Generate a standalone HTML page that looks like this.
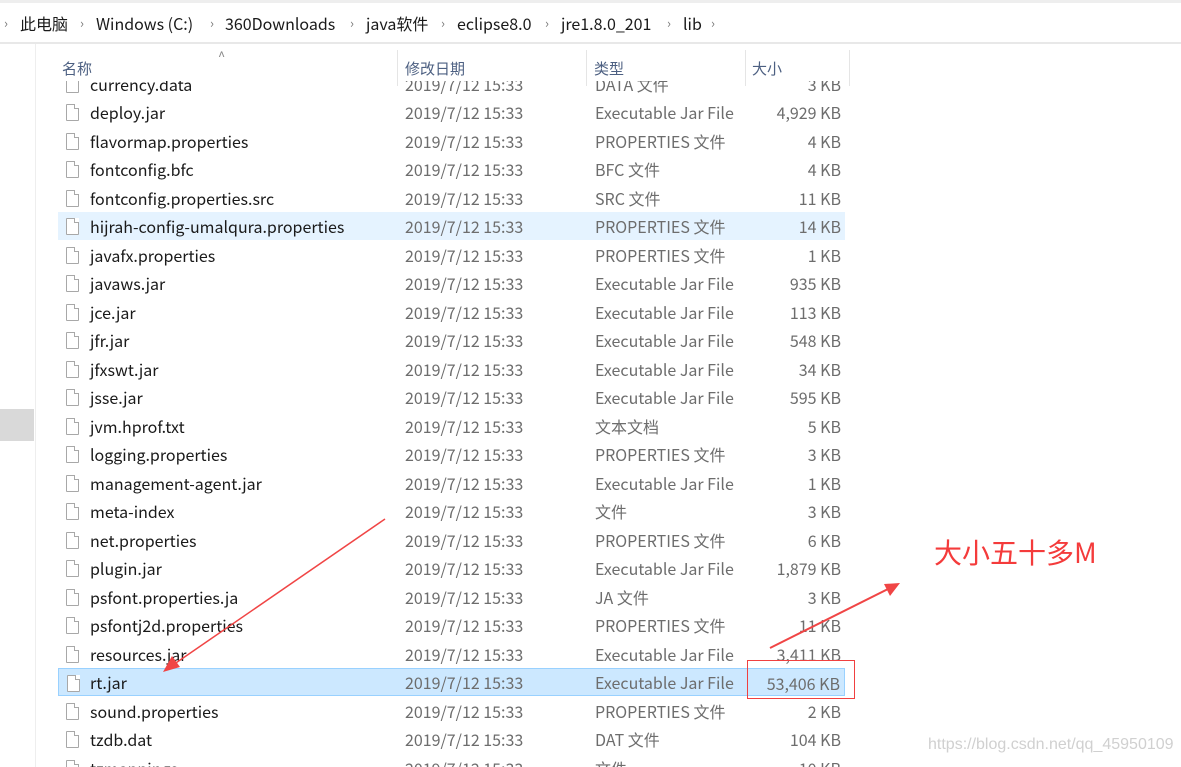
<!DOCTYPE html>
<html><head><meta charset="utf-8"><style>
*{margin:0;padding:0;box-sizing:border-box}
body{width:1181px;height:767px;background:#fff;position:relative;overflow:hidden;font-family:"Noto Sans CJK SC","Liberation Sans",sans-serif;font-size:16px}
.bc{position:absolute;left:0;top:0;width:1181px;height:44px;border-top:3px solid #eee;border-bottom:2px solid #e8e8e8;color:#1a1a1a;font-size:16px}
.bc span{position:absolute;top:0;line-height:40px;white-space:nowrap}
.bc .c{color:#777;font-size:13px}
.lp{position:absolute;left:35px;top:44px;width:1px;height:723px;background:#eee}
.gray{position:absolute;left:0;top:409px;width:34px;height:32px;background:#d9d9d9}
.hd{position:absolute;top:57px;line-height:24px;color:#4d6082;font-size:15px}
.sep{position:absolute;top:50px;width:1px;height:36px;background:#e5e5e5}
.list{position:absolute;left:36px;top:81px;width:850px;height:686px;overflow:hidden}
.row{position:absolute;left:22px;width:787px;height:28px}
.row.sel{background:#cce8ff;border:1px solid #99d1ff}
.row.hov{background:#e5f3ff}
.ic{position:absolute;left:8px;top:6px;width:13px;height:17px;border:1px solid #a8a8a8;background:#fff;border-radius:1px}
.ic:after{content:"";position:absolute;right:-1px;top:-1px;width:4px;height:4px;background:#fff;border-left:1px solid #a8a8a8;border-bottom:1px solid #a8a8a8}
.row div.n,.row div.d,.row div.t,.row div.s{position:absolute;top:0;line-height:28px;white-space:nowrap}
.n{left:32px;color:#1a1a1a}
.d{left:347px;color:#6d6d6d}
.t{left:537px;color:#6d6d6d}
.s{right:4px;color:#6d6d6d;text-align:right}
.sel .n,.sel .d,.sel .t{margin-left:-1px;margin-top:-1px}
</style></head><body>
<div class="bc">
<span class="c" style="left:4px">›</span><span style="left:20px">此电脑</span>
<span class="c" style="left:80px">›</span><span style="left:96px">Windows (C:)</span>
<span class="c" style="left:210px">›</span><span style="left:225px">360Downloads</span>
<span class="c" style="left:350px">›</span><span style="left:366px">java软件</span>
<span class="c" style="left:441px">›</span><span style="left:457px">eclipse8.0</span>
<span class="c" style="left:545px">›</span><span style="left:561px">jre1.8.0_201</span>
<span class="c" style="left:667px">›</span><span style="left:683px">lib</span>
<span class="c" style="left:711px">›</span>
</div>
<div class="lp"></div><div class="gray"></div>
<div class="hd" style="left:218px;top:44px;color:#888;font-size:13px">^</div>
<div class="hd" style="left:62px">名称</div>
<div class="sep" style="left:397px"></div><div class="hd" style="left:405px">修改日期</div>
<div class="sep" style="left:586px"></div><div class="hd" style="left:594px">类型</div>
<div class="sep" style="left:745px"></div><div class="hd" style="left:752px">大小</div>
<div class="sep" style="left:849px"></div>
<div class="list" id="L"></div>
<div style="position:absolute;left:747px;top:660px;width:108px;height:39px;border:1px solid #f04040"></div>
<div style="position:absolute;left:934px;top:532px;color:#f43b3b;font-size:28px;line-height:40px">大小五十多M</div>
<svg style="position:absolute;left:0;top:0" width="1181" height="767">
<line x1="385" y1="519" x2="170" y2="667" stroke="#f04545" stroke-width="1.5"/>
<polygon points="163,672 172,656 180,667" fill="#f04545"/>
<line x1="770" y1="648" x2="892" y2="587" stroke="#f04545" stroke-width="2"/>
<polygon points="900,583 884,584 890,596" fill="#f04545"/>
</svg>
<div style="position:absolute;left:928px;top:736px;color:#d0d0d0;font-size:16px;font-family:'Liberation Sans',sans-serif">https://blog.csdn.net/qq_45950109</div>
<script>
var r=[["currency.data","DATA 文件","3 KB"],["deploy.jar","Executable Jar File","4,929 KB"],["flavormap.properties","PROPERTIES 文件","4 KB"],["fontconfig.bfc","BFC 文件","4 KB"],["fontconfig.properties.src","SRC 文件","11 KB"],["hijrah-config-umalqura.properties","PROPERTIES 文件","14 KB"],["javafx.properties","PROPERTIES 文件","1 KB"],["javaws.jar","Executable Jar File","935 KB"],["jce.jar","Executable Jar File","113 KB"],["jfr.jar","Executable Jar File","548 KB"],["jfxswt.jar","Executable Jar File","34 KB"],["jsse.jar","Executable Jar File","595 KB"],["jvm.hprof.txt","文本文档","5 KB"],["logging.properties","PROPERTIES 文件","3 KB"],["management-agent.jar","Executable Jar File","1 KB"],["meta-index","文件","3 KB"],["net.properties","PROPERTIES 文件","6 KB"],["plugin.jar","Executable Jar File","1,879 KB"],["psfont.properties.ja","JA 文件","3 KB"],["psfontj2d.properties","PROPERTIES 文件","11 KB"],["resources.jar","Executable Jar File","3,411 KB"],["rt.jar","Executable Jar File","53,406 KB"],["sound.properties","PROPERTIES 文件","2 KB"],["tzdb.dat","DAT 文件","104 KB"],["tzmappings","文件","10 KB"]];
var h="";r.forEach(function(x,i){var y=-11+i*28.48;var c=i==21?"row sel":(i==5?"row hov":"row");
h+='<div class="'+c+'" style="top:'+y+'px"><div class="ic"></div><div class="n">'+x[0]+'</div><div class="d">2019/7/12 15:33</div><div class="t">'+x[1]+'</div><div class="s">'+x[2]+'</div></div>';});
document.getElementById("L").innerHTML=h;
</script>
</body></html>
